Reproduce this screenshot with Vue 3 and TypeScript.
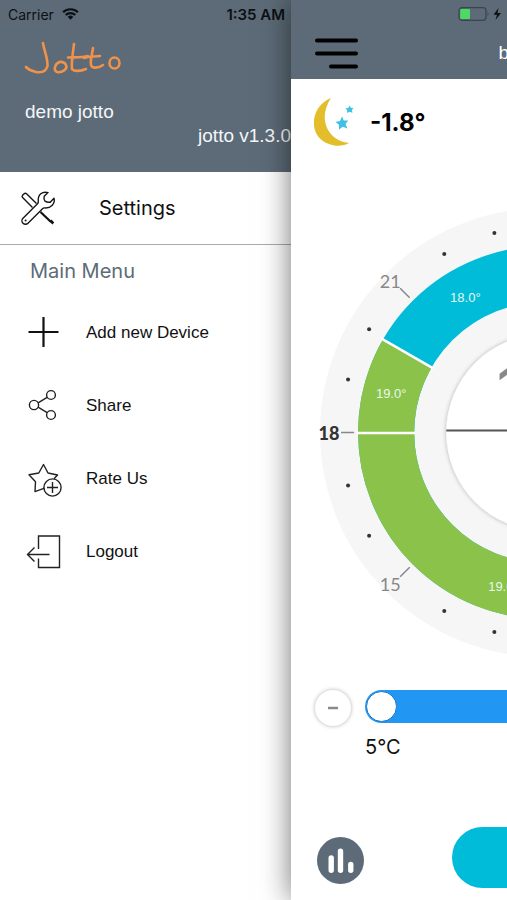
<script setup lang="ts">
import { ref } from 'vue'

interface Point {
  x: number
  y: number
}

const target = ref<number>(5)

// Hour dots sit between the numbered ticks, every 15 degrees.
const dots: Point[] = Array.from({ length: 24 }, (_, i) => i)
  .filter((i) => i % 3 !== 0)
  .map((i) => {
    const angle = (i * 15 * Math.PI) / 180
    return { x: Math.round(206 * Math.cos(angle)) + 3, y: Math.round(206 * Math.sin(angle)) }
  })
</script>

<template>
  <div class="app">
    <aside class="drawer">
      <header class="profile">
        <div class="status">
          <span>Carrier</span>
          <svg class="wifi" viewBox="0 0 18 13" aria-hidden="true">
            <path d="M1 4.6a11.4 11.4 0 0 1 16 0M3.8 7.6a7.5 7.5 0 0 1 10.4 0" fill="none" stroke="#0c1014" stroke-width="2.3" />
            <path d="M9 12.6 6 9.7a4.3 4.3 0 0 1 6 0z" fill="#0c1014" />
          </svg>
          <span class="clock">1:35 AM</span>
        </div>
        <svg class="logo" viewBox="0 0 98 34" role="img" aria-label="Jotto">
          <g fill="none" stroke="#f0924a" stroke-width="2.6" stroke-linecap="round" stroke-linejoin="round">
            <path d="M19 2C20 9 24 18 23.500 25C22 31 18 32 12 31C8 30 4 28 2 26" />
            <path d="M36 21C31 22 29 29 33 31C38 32 44 28 42 24C41 21 36 20 34 22" />
            <path d="M50 3C49 12 47 22 48 28C50 31 57 30 62 28M44 16.500C50 16 57 17 64 15" />
            <path d="M69 7C68 14 66 20 67 24C68 28 75 27 79 24M60 17C66 15 71 16 76 15" />
            <ellipse cx="90.500" cy="22" rx="5" ry="5.500" />
          </g>
        </svg>
        <p class="user">demo jotto</p>
        <p class="version">jotto v1.3.0</p>
      </header>

      <nav aria-label="Main">
        <a class="settings" href="#settings">
          <svg class="tools" viewBox="0 0 36 36" aria-hidden="true">
            <g fill="#fff" stroke="#161616" stroke-width="1.400" stroke-linejoin="round">
              <path d="M12.500 17.500 2.600 7.600Q1.500 6.500 2.600 5.300L4.200 3.700Q5.500 2.800 6.800 4L16.500 13.500" />
              <path d="M20.500 22 31 32" stroke="#111" stroke-width="2.200" />
              <path d="M30.500 30.500 33.300 33.500" stroke="#111" stroke-width="2.600" />
              <path d="M28 2.600C22.500 1 17.500 4.500 18.300 11.500Q18.400 12.700 17.500 13.700L3 28.200A3.500 3.500 0 0 0 8 33.200L22.500 18.700Q23.400 17.800 24.800 17.900C31 18.300 35.500 13.500 34 8.300L30.200 12.200Q27.500 12.700 25 11.200Q23.500 8.800 24.200 6.300Z" />
            </g>
            <circle cx="5.600" cy="30.600" r="1" fill="#161616" />
          </svg>
          <span>Settings</span>
        </a>

        <h2 class="heading">Main Menu</h2>

        <ul class="menu">
          <li>
            <a href="#add">
              <svg viewBox="0 0 38 38" aria-hidden="true">
                <path d="M19.500 3v30M4.500 18h30" fill="none" stroke="#111" stroke-width="2.200" />
              </svg>
              <span>Add new Device</span>
            </a>
          </li>
          <li>
            <a href="#share">
              <svg viewBox="0 0 38 38" aria-hidden="true">
                <g fill="none" stroke="#222" stroke-width="1.400">
                  <circle cx="10" cy="18" r="4.600" />
                  <circle cx="27" cy="8" r="4.400" />
                  <circle cx="27" cy="28" r="4.400" />
                  <path d="M14.100 15.800 23.100 10.400M14.100 20.200 23.100 25.600" />
                </g>
              </svg>
              <span>Share</span>
            </a>
          </li>
          <li>
            <a href="#rate">
              <svg viewBox="0 0 38 38" aria-hidden="true">
                <g fill="none" stroke="#222" stroke-width="1.400" stroke-linejoin="round">
                  <path d="M20.500 28.200 11 31.600 11.500 21.800 5 14.800 14.800 13 19.500 4.500 24 13 33.500 15 30 18.800" />
                  <circle cx="28.500" cy="27.500" r="8.600" />
                  <path d="M28.500 22v11M23 27.500h11" />
                </g>
              </svg>
              <span>Rate Us</span>
            </a>
          </li>
          <li>
            <a href="#logout">
              <svg viewBox="0 0 38 38" aria-hidden="true">
                <g fill="none" stroke="#222" stroke-width="1.400">
                  <path d="M14.500 16V3H35.500V34.500H14.500V25.500" />
                  <path d="M25.500 21.500H3.500M10.500 14.500 3.500 21.500l7 7" />
                </g>
              </svg>
              <span>Logout</span>
            </a>
          </li>
        </ul>
      </nav>
    </aside>

    <div class="panel">
      <main class="page">
        <header class="topbar">
          <div class="power">
            <svg viewBox="0 0 44 14" aria-hidden="true">
              <rect x="1" y="0.700" width="27" height="12.600" rx="3" fill="none" stroke="#39454e" stroke-width="1.200" />
              <path d="M29.700 4.500q1.800 2.500 0 5z" fill="#39454e" />
              <rect x="2.200" y="2" width="9.800" height="10" rx="1" fill="#4cd964" />
              <path d="M40.500 1 35.500 7.700H39L37.500 13 43 6H39.500z" fill="#0c1014" />
            </svg>
          </div>
          <div class="titlebar">
            <button class="burger" type="button" aria-label="Menu">
              <svg viewBox="0 0 43 31" aria-hidden="true">
                <path d="M2 2.500H41M2 15.500H41M16 28.500H41" fill="none" stroke="#000" stroke-width="4" stroke-linecap="round" />
              </svg>
            </button>
            <h1 class="title">b</h1>
          </div>
        </header>

        <section class="weather">
          <svg viewBox="0 0 42 50" aria-hidden="true">
            <path d="M17 1C-5 10 -6 40 15 47C22 50 30 49 35 46C14 44 3 22 17 1Z" fill="#e4bd2b" />
            <path d="M28 19.500 29.800 23.500 34.200 23.400 31.600 27 33.400 31.400 28.800 29.800 25 32.400 25 27.800 21.400 25 26 23.900Z" fill="#3fc0e4" />
            <path d="M35.500 8.500 36.800 10.800 39.500 11 37.800 13 38.500 15.800 35.500 14.800 33 16 33.200 13.300 31.500 11.300 34.300 10.900Z" fill="#3fc0e4" />
          </svg>
          <span>-1.8°</span>
        </section>

        <svg class="dial" viewBox="-224 -224 448 448" role="img" aria-label="Daily temperature schedule">
          <defs>
            <filter id="soft" x="-20%" y="-20%" width="140%" height="140%">
              <feDropShadow dx="0" dy="0" stdDeviation="2" flood-color="#000" flood-opacity="0.300" />
            </filter>
          </defs>
          <circle r="224" fill="#f6f6f6" />
          <circle r="158" fill="none" stroke="#00bcd9" stroke-width="56" />
          <path d="M-136.800 -79A158 158 0 1 0 158 0" fill="none" stroke="#8bc34a" stroke-width="56" />
          <path d="M-111 -64-163 -94M-129 .5H-187" stroke="#fff" stroke-width="2.500" />
          <circle v-for="(dot, i) in dots" :key="i" :cx="dot.x" :cy="dot.y" r="2" fill="#333" />
          <path d="M-144 -144-134.500 -134.500M-144 144-134.500 134.500M-203 0H-190" stroke="#888" stroke-width="1.500" />
          <text class="hour" x="-154" y="-144">21</text>
          <text class="hour" x="-154" y="158">15</text>
          <text class="hour now" x="-215" y="7">18</text>
          <circle r="98" fill="#fff" filter="url(#soft)" />
          <text class="value" x="-79" y="-130">18.0°</text>
          <text class="value" x="-153" y="-34">19.0°</text>
          <text class="value" x="-41" y="158">19.0°</text>
          <text class="current" x="-48" y="-18">1</text>
          <path d="M-98 -2H98" stroke="#555" stroke-width="2" />
        </svg>

        <section class="control">
          <button class="step" type="button" aria-label="Decrease" @click="target = Math.max(5, target - 1)">
            <svg viewBox="0 0 10 4" aria-hidden="true"><path d="M0 2H10" stroke="#8a8a8a" stroke-width="2.500" /></svg>
          </button>
          <div class="range">
            <input id="target" v-model.number="target" type="range" min="5" max="35" />
            <label for="target">{{ target }}°C</label>
          </div>
        </section>

        <footer class="actions">
          <button class="chart" type="button" aria-label="Statistics">
            <svg viewBox="0 0 48 48" aria-hidden="true">
              <path d="M14.500 21.500V34M24 14.500V34M34.500 28V34" fill="none" stroke="#fff" stroke-width="5.500" stroke-linecap="round" />
            </svg>
          </button>
          <button class="primary" type="button" aria-label="Mode"></button>
        </footer>
      </main>
    </div>
  </div>
</template>

<style>
body {
  margin: 0;
  background: #fff;
}
</style>

<style scoped>
.app {
  display: flex;
  min-height: 100vh;
  overflow: hidden;
  font-family: "Liberation Sans", Arial, sans-serif;
  color: #111;
}

a {
  color: inherit;
  text-decoration: none;
}

button {
  padding: 0;
  border: 0;
  background: none;
  cursor: pointer;
}

svg {
  display: block;
}

h1,
h2,
p,
ul {
  margin: 0;
  padding: 0;
  font-weight: 400;
  list-style: none;
}

.drawer {
  flex: 0 0 57.4%;
  background: #fff;
}

.profile {
  box-sizing: border-box;
  height: 172px;
  background: #5c6b77;
  color: #f4f7fa;
}

.status {
  display: flex;
  align-items: center;
  gap: 8px;
  height: 28px;
  padding: 0 6px 0 8px;
  font-family: Inter, "Liberation Sans", sans-serif;
  font-size: 14px;
  color: #0c1014;
}

.wifi {
  width: 17px;
  height: 12px;
}

.clock {
  margin-left: auto;
  font-size: 15px;
  font-weight: 600;
}

.logo {
  width: 98px;
  height: 34px;
  margin: 13px 0 0 24px;
}

.user,
.version {
  font-size: 19px;
  line-height: 24px;
}

.user {
  margin: 25px 0 0 25px;
}

.version {
  text-align: right;
}

.settings {
  display: flex;
  align-items: center;
  gap: 43px;
  height: 72px;
  padding: 0 20px;
  border-bottom: 1px solid #aaa;
  font-family: Inter, "Liberation Sans", sans-serif;
  font-size: 20px;
}

.tools {
  width: 36px;
  height: 36px;
}

.heading {
  padding: 14px 30px 13px;
  font-family: Inter, "Liberation Sans", sans-serif;
  font-size: 20px;
  line-height: 24px;
  color: #5c6b77;
}

.menu a {
  display: flex;
  align-items: center;
  gap: 24px;
  height: 73px;
  padding: 0 24px;
  font-size: 17px;
}

.menu svg {
  width: 38px;
  height: 38px;
}

.panel {
  position: relative;
  flex: 1 1 0;
  min-width: 0;
  overflow: hidden;
  background: #fff;
  box-shadow: 0 0 28px rgba(0, 0, 0, 0.55);
}

.page {
  width: 100vw;
}

.topbar {
  height: 79px;
  background: #5c6b77;
}

.power {
  display: flex;
  align-items: center;
  height: 27px;
  padding-left: 167px;
}

.power svg {
  width: 44px;
  height: 14px;
}

.titlebar {
  display: grid;
  grid-template-columns: 1fr 92px 1fr;
  align-items: center;
  height: 52px;
}

.burger {
  width: 43px;
  margin-left: 24px;
}

.title {
  font-size: 19px;
  color: #fff;
}

.weather {
  display: flex;
  align-items: center;
  gap: 14px;
  padding: 18px 23px 0;
  font-family: Inter, "Liberation Sans", sans-serif;
  font-size: 24px;
  font-weight: 700;
  color: #000;
}

.weather svg {
  width: 42px;
  height: 50px;
}

.dial {
  width: calc(100% - 58px);
  margin: 61px auto 0;
  overflow: visible;
}

.hour {
  font-family: Lato, sans-serif;
  font-size: 18px;
  text-anchor: middle;
  fill: #888;
}

.now {
  font-weight: 900;
  fill: #333;
}

.value {
  font-size: 13px;
  text-anchor: middle;
  fill: #e6f8ee;
}

.current {
  font-family: Inter, sans-serif;
  font-size: 66px;
  fill: #888;
}

.control {
  display: flex;
  gap: 14px;
  padding: 33px 74px 0 24px;
}

.step {
  display: grid;
  place-items: center;
  flex: none;
  width: 36px;
  height: 36px;
  border-radius: 50%;
  background: #fff;
  box-shadow: 0 0 4px rgba(0, 0, 0, 0.3);
}

.step svg {
  width: 10px;
}

.range {
  display: flex;
  flex: 1;
  flex-direction: column;
  gap: 12px;
}

.range input {
  appearance: none;
  box-sizing: border-box;
  width: 100%;
  height: 33px;
  margin: 0;
  padding: 0 1px;
  border-radius: 17px;
  background: #2196f3;
}

.range input::-webkit-slider-thumb {
  appearance: none;
  box-sizing: border-box;
  width: 31px;
  height: 31px;
  border: 1px solid #1a78c8;
  border-radius: 50%;
  background: #fff;
}

.range label {
  font-family: Inter, "Liberation Sans", sans-serif;
  font-size: 20px;
  line-height: 24px;
}

.actions {
  display: grid;
  grid-template-columns: 1fr 185px 1fr;
  align-items: end;
  padding: 68px 0 12px;
}

.chart {
  width: 47px;
  height: 47px;
  margin: 0 0 4px 26px;
  border-radius: 50%;
  background: #5c6b77;
}

.primary {
  height: 61px;
  border-radius: 31px;
  background: #00bcd9;
}
</style>
